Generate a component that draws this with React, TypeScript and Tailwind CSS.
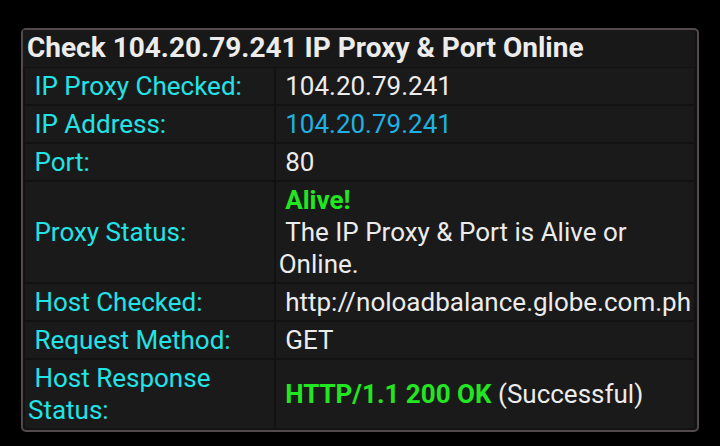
type Row = {
  label: string
  value: React.ReactNode
}

const rows: Row[] = [
  { label: 'IP Proxy Checked:', value: <span className="text-[#ececec]">{'\u00a0104.20.79.241'}</span> },
  { label: 'IP Address:', value: <span className="text-[#1fb1e3]">{'\u00a0104.20.79.241'}</span> },
  { label: 'Port:', value: <span className="text-[#ececec]">{'\u00a080'}</span> },
  {
    label: 'Proxy Status:',
    value: (
      <>
        <span className="font-bold text-[#22e622]">{'\u00a0Alive!'}</span>
        <br />
        <span className="text-[#ececec]">{'\u00a0The IP Proxy & Port is Alive or Online.'}</span>
      </>
    ),
  },
  {
    label: 'Host Checked:',
    value: <span className="text-[#ececec]">{'\u00a0http://noloadbalance.globe.com.ph'}</span>,
  },
  { label: 'Request Method:', value: <span className="text-[#ececec]">{'\u00a0GET'}</span> },
  {
    label: 'Host Response Status:',
    value: (
      <>
        <span className="font-bold text-[#22e622]">{'\u00a0HTTP/1.1 200 OK'}</span>
        <span className="text-[#ececec]"> (Successful)</span>
      </>
    ),
  },
]

export default function App() {
  return (
    <div className="w-[720px] h-[446px] bg-black pt-[28px] pl-[21px] font-['Roboto',sans-serif] text-[26px] leading-[32px]">
      <div className="w-[678px] h-[404px] rounded-[5px] border-2 border-[#524a4a] bg-[#121212] pr-[2px]">
        <div className="h-[37px] bg-[#181818] pl-[4px] text-[28px] font-bold leading-[36px] text-[#ececec]">
          Check 104.20.79.241 IP Proxy &amp; Port Online
        </div>
        <table className="w-[673px] border-separate border-spacing-[2px] -mt-[1px]">
          <tbody>
            {rows.map((r) => (
              <tr key={r.label}>
                <td className="w-[251px] bg-[#1a1a1a] px-[3px] py-[2px] align-middle text-[#22e3e6]">
                  {'\u00a0' + r.label}
                </td>
                <td className="bg-[#1a1a1a] px-[3px] py-[2px] align-middle">{r.value}</td>
              </tr>
            ))}
          </tbody>
        </table>
      </div>
    </div>
  )
}
